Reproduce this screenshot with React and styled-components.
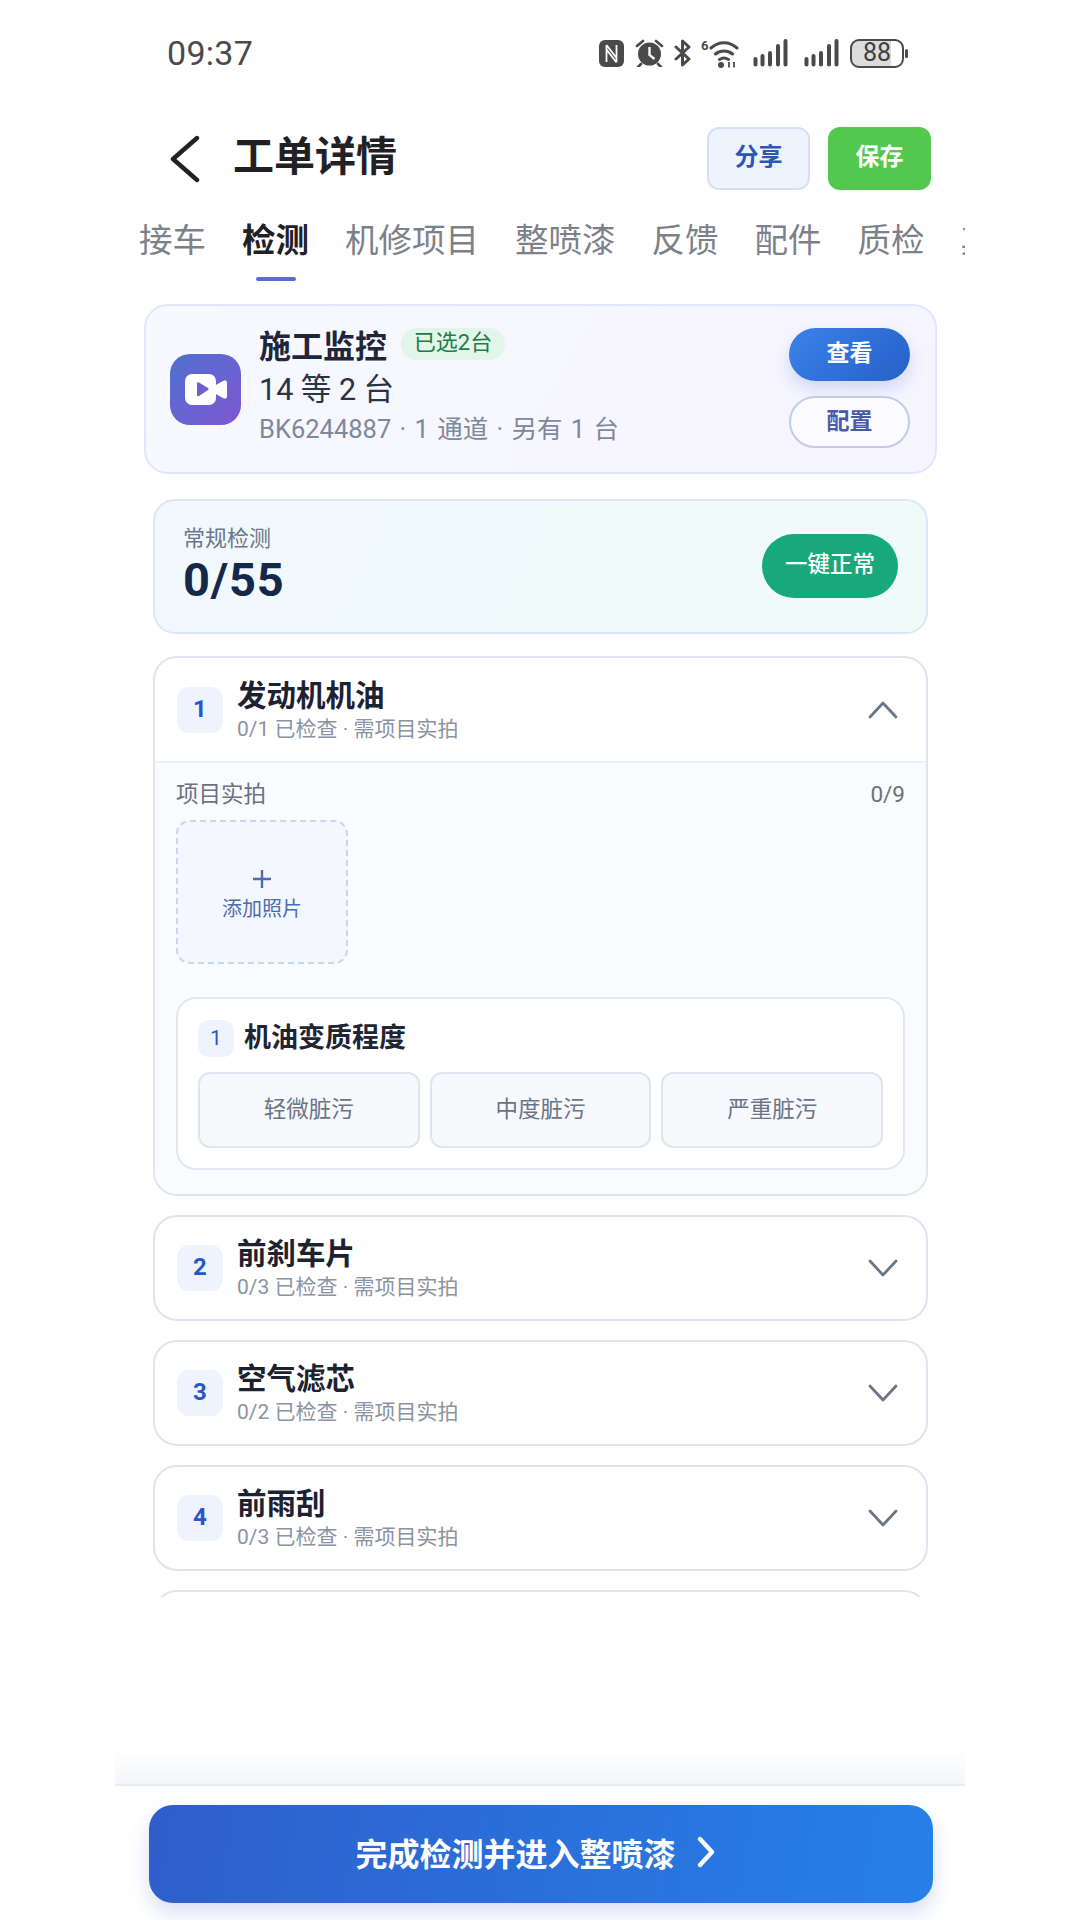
import React from 'react'
import styled, { createGlobalStyle } from 'styled-components'

const GlobalStyle = createGlobalStyle`
    html, body {
        margin:0;
        padding:0;
        background:#fff;
    }
    * {
        box-sizing:border-box;
    }
    body {
        font-family:Roboto, "Noto Sans CJK SC", sans-serif;
    }
`

const Page = styled.div`
    width:850px;
    height:1920px;
    margin:0 auto;
    display:flex;
    flex-direction:column;
    overflow:hidden;
    background:#fff;
`

const StatusBar = styled.div`
    height:106px;
    flex:none;
    display:flex;
    align-items:center;
    justify-content:space-between;
    padding:0 57px 0 52px;
`
const Clock = styled.div`
    font-size:34px;
    color:#4a4a4a;
    letter-spacing:.3px;
`
const StatusIcons = styled.div`
    display:flex;
    align-items:center;
    height:30px;
`
const StatusGlyph = styled.svg`
    display:block;
    flex:none;
    margin-left:${p => p.$gap || 0}px;
`
const SixMark = styled.span`
    font-size:13px;
    font-weight:700;
    line-height:13px;
    color:#4a4a4a;
    margin:-16px 0 0 10px;
    width:8px;
`
const Battery = styled.div`
    width:54px;
    height:29px;
    margin-left:11px;
    border:2.5px solid #4a4a4a;
    border-radius:9px;
    background:linear-gradient(90deg, #dcdcdc 78%, #fff 78%);
    font-size:25px;
    line-height:24px;
    text-align:center;
    color:#3f3f3f;
`
const BatteryTip = styled.div`
    width:3px;
    height:9px;
    margin-left:1px;
    border-radius:2px;
    background:#4a4a4a;
`

const Header = styled.div`
    flex:none;
    height:63px;
    margin-top:21px;
    padding:0 34px 0 55px;
    display:flex;
    align-items:center;
`
const Title = styled.div`
    font-size:41px;
    font-weight:700;
    color:#1f2125;
    margin-left:33px;
    padding-bottom:11px;
    flex:1;
`
const HeadButton = styled.div`
    width:103px;
    height:63px;
    margin-left:${p => p.$save ? 18 : 0}px;
    padding-bottom:9px;
    border-radius:12px;
    display:flex;
    align-items:center;
    justify-content:center;
    font-size:24px;
    font-weight:700;
    color:${p => p.$save ? '#fff' : '#2b57b8'};
    background:${p => p.$save ? '#53c84f' : '#eef3fe'};
    border:${p => p.$save ? 'none' : '2px solid #d5e0f5'};
`

const Tabs = styled.div`
    flex:none;
    margin-top:29px;
    padding-left:24px;
    display:flex;
    gap:36px;
    overflow:hidden;
`
const Tab = styled.div`
    flex:none;
    display:flex;
    flex-direction:column;
    align-items:center;
    font-size:33.5px;
    line-height:44px;
    font-weight:${p => p.$active ? 700 : 400};
    color:${p => p.$active ? '#1f2125' : '#7c8089'};
`
const TabBar = styled.div`
    width:40px;
    height:4px;
    margin-top:14px;
    border-radius:2px;
    background:${p => p.$active ? '#5b6bcf' : 'transparent'};
`

const Scroller = styled.div`
    flex:none;
    height:1316px;
    overflow:hidden;
    padding:23px 37px 0 38px;
`

const MonitorCard = styled.div`
    margin:0 -9px;
    height:170px;
    padding:0 25px 0 24px;
    display:flex;
    align-items:center;
    border:2px solid #e0e7fb;
    border-radius:24px;
    background:linear-gradient(120deg, #f7f9ff, #f6f4fe);
`
const CameraTile = styled.div`
    width:71px;
    height:71px;
    flex:none;
    border-radius:20px;
    display:flex;
    align-items:center;
    justify-content:center;
    background:linear-gradient(135deg, #4f70cf, #7f57d3);
`
const MonitorInfo = styled.div`
    flex:1;
    margin-left:18px;
    padding-bottom:8px;
    display:flex;
    flex-direction:column;
`
const MonitorTitleRow = styled.div`
    display:flex;
    align-items:center;
    height:40px;
`
const MonitorTitle = styled.div`
    font-size:32px;
    font-weight:700;
    color:#20263a;
`
const SelectedBadge = styled.div`
    margin-left:14px;
    height:32px;
    width:104px;
    border-radius:16px;
    background:#e1f6e9;
    color:#1f7a4c;
    font-size:22px;
    line-height:30px;
    text-align:center;
`
const MonitorCount = styled.div`
    font-size:30.5px;
    line-height:40px;
    margin-top:6px;
    color:#2b3346;
`
const MonitorMeta = styled.div`
    font-size:25.5px;
    line-height:36px;
    margin-top:1px;
    word-spacing:2px;
    color:#7f879c;
`
const MonitorActions = styled.div`
    display:flex;
    flex-direction:column;
    gap:15px;
    padding-bottom:2px;
`
const PillButton = styled.div`
    width:121px;
    height:${p => p.$primary ? 53 : 52}px;
    padding-bottom:7px;
    border-radius:27px;
    display:flex;
    align-items:center;
    justify-content:center;
    font-size:23px;
    font-weight:700;
    color:${p => p.$primary ? '#fff' : '#4a5aa8'};
    background:${p => p.$primary ? 'linear-gradient(135deg, #3c82ea, #2560c8)' : '#fbfbff'};
    border:${p => p.$primary ? 'none' : '2px solid #c1cce6'};
    box-shadow:${p => p.$primary ? '0 8px 16px rgba(50,100,210,.2)' : 'none'};
`

const SummaryCard = styled.div`
    margin-top:25px;
    height:135px;
    padding:0 28px 2px 28px;
    display:flex;
    align-items:center;
    justify-content:space-between;
    border:2px solid #dbe7f8;
    border-radius:22px;
    background:linear-gradient(115deg, #f1f8fe, #effbf8);
`
const SummaryText = styled.div`
    padding-bottom:1px;
`
const SummaryLabel = styled.div`
    font-size:22px;
    line-height:30px;
    color:#6b7688;
`
const SummaryValue = styled.div`
    font-size:47px;
    line-height:52px;
    font-weight:700;
    letter-spacing:.8px;
    color:#14294a;
`
const NormalButton = styled.div`
    width:136px;
    height:64px;
    padding-bottom:7px;
    border-radius:32px;
    background:#17a97a;
    color:#fff;
    font-size:22.5px;
    font-weight:500;
    display:flex;
    align-items:center;
    justify-content:center;
`

const ItemCard = styled.div`
    margin-top:${p => p.$first ? 22 : 19}px;
    border:2px solid #dfe4ef;
    border-radius:24px;
    overflow:hidden;
    background:#fff;
`
const ItemHead = styled.div`
    height:${p => p.$open ? 103 : 102}px;
    padding:0 28px 0 22px;
    display:flex;
    align-items:center;
`
const NumberBox = styled.div`
    width:${p => p.$small ? 36 : 46}px;
    height:${p => p.$small ? 37 : 46}px;
    padding-bottom:2px;
    flex:none;
    border-radius:${p => p.$small ? 10 : 12}px;
    background:#eff3fe;
    color:#2b57c8;
    font-size:${p => p.$small ? 21 : 24}px;
    font-weight:${p => p.$small ? 400 : 700};
    display:flex;
    align-items:center;
    justify-content:center;
`
const ItemText = styled.div`
    flex:1;
    margin-left:14px;
`
const ItemTitle = styled.div`
    font-size:29.5px;
    line-height:38px;
    font-weight:700;
    color:#1c2230;
`
const ItemSub = styled.div`
    font-size:21px;
    line-height:28px;
    color:#8b93a3;
`
const ItemBody = styled.div`
    padding:16px 21px 24px;
    background:#fafbfe;
    border-top:2px solid #edf0f6;
`
const PhotoRow = styled.div`
    display:flex;
    justify-content:space-between;
    font-size:22.5px;
    line-height:30px;
    color:#6b7280;
`
const AddPhoto = styled.div`
    width:172px;
    height:144px;
    margin-top:11px;
    padding-top:8px;
    border:2px dashed #c9d5e8;
    border-radius:14px;
    background:#f4f7fd;
    display:flex;
    flex-direction:column;
    align-items:center;
    justify-content:center;
    color:#4d6bb0;
`
const AddLabel = styled.div`
    font-size:20px;
    line-height:28px;
    margin-top:7px;
`
const CheckCard = styled.div`
    margin-top:33px;
    padding:21px 20px 20px;
    border:2px solid #e2e7f0;
    border-radius:20px;
    background:#fff;
`
const CheckHead = styled.div`
    display:flex;
    align-items:center;
    gap:10px;
    height:37px;
`
const CheckTitle = styled.div`
    font-size:27px;
    line-height:37px;
    font-weight:700;
    color:#1f2533;
`
const OptionRow = styled.div`
    margin-top:15px;
    display:grid;
    grid-template-columns:repeat(3, 1fr);
    gap:10px;
`
const OptionButton = styled.div`
    height:76px;
    padding-bottom:6px;
    border:2px solid #dfe5ef;
    border-radius:12px;
    background:#f7f9fd;
    font-size:22.5px;
    color:#6b7486;
    display:flex;
    align-items:center;
    justify-content:center;
`

const Footer = styled.div`
    margin-top:auto;
    flex:none;
    height:170px;
`
const FooterShade = styled.div`
    height:36px;
    border-bottom:2px solid #e9ecf3;
    background:linear-gradient(rgba(240,242,248,0), #f3f5f9);
`
const CompleteButton = styled.div`
    height:98px;
    margin:19px 32px 0 34px;
    padding:0 12px 5px 0;
    border-radius:24px;
    background:linear-gradient(100deg, #2f5ecb, #2680e8);
    box-shadow:0 10px 20px rgba(48,94,200,.2);
    color:#fff;
    font-size:32px;
    font-weight:700;
    display:flex;
    align-items:center;
    justify-content:center;
    gap:21px;
`

const Chevron = ({ up }) => (
    <svg width="30" height="18" viewBox="0 0 30 18" fill="none" stroke="#6b7688" strokeWidth="2.8" strokeLinecap="round" strokeLinejoin="round">
        <polyline points={up ? '2,16 15,2 28,16' : '2,2 15,16 28,2'} />
    </svg>
)

const SignalBars = ({ gap }) => (
    <StatusGlyph $gap={gap} width="35" height="28" viewBox="0 0 35 28">
        <path d="M2.5 20v5.5M9.5 17v8.5M17 14v11.5M25 7v18.5M32.5 2v23.5" stroke="#4a4a4a" strokeWidth="4" strokeLinecap="round" />
    </StatusGlyph>
)

const renderStatusIcons = () => (
    <StatusIcons>
        <StatusGlyph width="25" height="27" viewBox="0 0 25 27">
            <rect x="0" y="0" width="25" height="27" rx="6" fill="#4a4a4a" />
            <path d="M7.5 5v17M17.5 5v17M7.5 5l10 13M7.5 9.5l10 13" fill="none" stroke="#fff" strokeWidth="1.8" />
        </StatusGlyph>
        <StatusGlyph $gap={11} width="29" height="28" viewBox="0 0 29 28">
            <circle cx="14.5" cy="15" r="11.5" fill="#4a4a4a" />
            <path d="M14.5 8v8l5 4" fill="none" stroke="#fff" strokeWidth="2.4" />
            <path d="M2 7l6-5M27 7l-6-5M6 25l-3 3M23 25l3 3" stroke="#4a4a4a" strokeWidth="2.6" strokeLinecap="round" />
        </StatusGlyph>
        <StatusGlyph $gap={10} width="17" height="28" viewBox="0 0 17 28">
            <path d="M2 8l13 12-6.5 6V2L15 8 2 20" fill="none" stroke="#4a4a4a" strokeWidth="3" strokeLinejoin="round" strokeLinecap="round" />
        </StatusGlyph>
        <SixMark>6</SixMark>
        <StatusGlyph width="30" height="29" viewBox="0 0 30 29">
            <path d="M2 9c8-7 18-7 26 0M6.5 15c5-4 12-4 17 0M10.5 20.5c3-2 6-2 9 0" fill="none" stroke="#4a4a4a" strokeWidth="3" strokeLinecap="round" />
            <circle cx="12" cy="26" r="3" fill="#4a4a4a" />
            <path d="M20 23v5.5M25 23v5.5" stroke="#4a4a4a" strokeWidth="1.8" />
        </StatusGlyph>
        <SignalBars gap={14} />
        <SignalBars gap={16} />
        <Battery>88</Battery>
        <BatteryTip />
    </StatusIcons>
)

const tabs = ['接车', '检测', '机修项目', '整喷漆', '反馈', '配件', '质检', '其他']
const options = ['轻微脏污', '中度脏污', '严重脏污']
const items = [
    { no: 1, name: '发动机机油', done: '0/1', open: true },
    { no: 2, name: '前刹车片', done: '0/3' },
    { no: 3, name: '空气滤芯', done: '0/2' },
    { no: 4, name: '前雨刮', done: '0/3' },
]

const InspectItem = ({ no, name, done, open }) => (
    <ItemCard $first={no === 1}>
        <ItemHead $open={open}>
            <NumberBox>{no}</NumberBox>
            <ItemText>
                <ItemTitle>{name}</ItemTitle>
                <ItemSub>{done} 已检查 · 需项目实拍</ItemSub>
            </ItemText>
            <Chevron up={open} />
        </ItemHead>
        {open && <ItemBody>
            <PhotoRow>
                <span>项目实拍</span>
                <span>0/9</span>
            </PhotoRow>
            <AddPhoto>
                <svg width="18" height="18" viewBox="0 0 18 18" stroke="#4d6bb0" strokeWidth="2.4">
                    <path d="M9 0v18M0 9h18" />
                </svg>
                <AddLabel>添加照片</AddLabel>
            </AddPhoto>
            <CheckCard>
                <CheckHead>
                    <NumberBox $small>1</NumberBox>
                    <CheckTitle>机油变质程度</CheckTitle>
                </CheckHead>
                <OptionRow>
                    {options.map(o => <OptionButton key={o}>{o}</OptionButton>)}
                </OptionRow>
            </CheckCard>
        </ItemBody>}
    </ItemCard>
)

export default function App() {
    return <Page>
        <GlobalStyle />
        <StatusBar>
            <Clock>09:37</Clock>
            {renderStatusIcons()}
        </StatusBar>
        <Header>
            <svg width="30" height="48" viewBox="0 0 30 48" fill="none" stroke="#1f2125" strokeWidth="4.4" strokeLinecap="round" strokeLinejoin="round">
                <polyline points="27,3 3,24 27,45" />
            </svg>
            <Title>工单详情</Title>
            <HeadButton>分享</HeadButton>
            <HeadButton $save>保存</HeadButton>
        </Header>
        <Tabs>
            {tabs.map(t => <Tab key={t} $active={t === '检测'}>
                {t}
                <TabBar $active={t === '检测'} />
            </Tab>)}
        </Tabs>
        <Scroller>
            <MonitorCard>
                <CameraTile>
                    <svg width="42" height="31" viewBox="0 0 42 31">
                        <rect x="0" y="0" width="31" height="31" rx="7" fill="#fff" />
                        <path d="M29 12l9-5q4-2 4 2v13q0 4-4 2l-9-5z" fill="#fff" />
                        <path d="M12 9.5q0-2 2-1l9 5.5q1.5 1 0 2l-9 6q-2 1-2-1z" fill="#6a62d0" />
                    </svg>
                </CameraTile>
                <MonitorInfo>
                    <MonitorTitleRow>
                        <MonitorTitle>施工监控</MonitorTitle>
                        <SelectedBadge>已选2台</SelectedBadge>
                    </MonitorTitleRow>
                    <MonitorCount>14 等 2 台</MonitorCount>
                    <MonitorMeta>BK6244887 · 1 通道 · 另有 1 台</MonitorMeta>
                </MonitorInfo>
                <MonitorActions>
                    <PillButton $primary>查看</PillButton>
                    <PillButton>配置</PillButton>
                </MonitorActions>
            </MonitorCard>
            <SummaryCard>
                <SummaryText>
                    <SummaryLabel>常规检测</SummaryLabel>
                    <SummaryValue>0/55</SummaryValue>
                </SummaryText>
                <NormalButton>一键正常</NormalButton>
            </SummaryCard>
            {items.map(item => <InspectItem key={item.no} {...item} />)}
            <ItemCard>
                <ItemHead />
            </ItemCard>
        </Scroller>
        <Footer>
            <FooterShade />
            <CompleteButton>
                完成检测并进入整喷漆
                <svg width="18" height="32" viewBox="0 0 18 32" fill="none" stroke="#fff" strokeWidth="4.4" strokeLinecap="round" strokeLinejoin="round">
                    <polyline points="3,3 15,16 3,29" />
                </svg>
            </CompleteButton>
        </Footer>
    </Page>
}
